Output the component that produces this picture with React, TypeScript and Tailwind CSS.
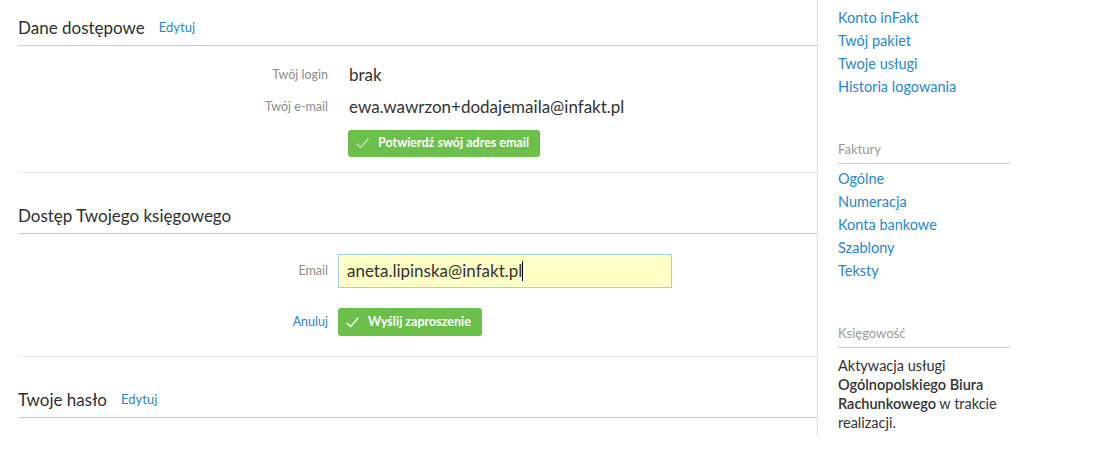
import React from 'react';

const font = { fontFamily: 'Lato, "Noto Sans", sans-serif' };

function Check() {
  return (
    <svg width="13" height="11" viewBox="0 0 13 11" className="shrink-0">
      <path d="M1 6.2 L4.6 9.6 L12 1" fill="none" stroke="currentColor" strokeWidth="1.4" strokeLinecap="round" strokeLinejoin="round" />
    </svg>
  );
}

function SectionHeader({ title, edit, first }: { title: string; edit?: boolean; first?: boolean }) {
  return (
    <div
      className={`flex items-center gap-[14px] border-b border-[#c8cdd2] ${
        first ? 'h-[46px] pt-[10px]' : 'h-[61px] pt-[26px]'
      }`}
    >
      <span className="text-[17px] leading-[24px] text-[#2f2f2f]">{title}</span>
      {edit && <a className="text-[13px] text-[#2b87c6] cursor-pointer">Edytuj</a>}
    </div>
  );
}

function SideLink({ children }: { children: React.ReactNode }) {
  return <a className="block text-[14.5px] leading-[23px] text-[#2b87c6] cursor-pointer whitespace-nowrap">{children}</a>;
}

function SideHeader({ children }: { children: React.ReactNode }) {
  return (
    <div className="text-[13px] leading-[20px] text-[#999] pb-[4px] border-b border-[#c8cdd2]">{children}</div>
  );
}

export default function App() {
  return (
    <div className="flex bg-white w-[1118px] h-[458px] overflow-hidden" style={font}>
      {/* Main column */}
      <div className="w-[817px] pl-[18px] shrink-0">
        {/* Dane dostępowe */}
        <SectionHeader title="Dane dostępowe" edit first />
        <div className="pt-[13px] pb-[15px] border-b border-[#e3e6e9]">
          <div className="flex items-center h-[32px]">
            <span className="w-[310px] text-right text-[12.5px] text-[#8c8c8c]">Twój login</span>
            <span className="ml-[21px] text-[17px] text-[#333]">brak</span>
          </div>
          <div className="flex items-center h-[32px]">
            <span className="w-[310px] text-right text-[12.5px] text-[#8c8c8c]">Twój e-mail</span>
            <span className="ml-[21px] text-[17px] text-[#333]">ewa.wawrzon+dodajemaila@infakt.pl</span>
          </div>
          <div className="flex mt-[7px]">
            <button className="ml-[330px] w-[192px] h-[27px] rounded-[3px] bg-[#6cbf4a] text-white text-[12.5px] font-bold whitespace-nowrap flex items-center gap-[9px] pl-[8px]">
              <span className="text-white/60"><Check /></span>
              Potwierdź swój adres email
            </button>
          </div>
        </div>

        {/* Dostęp Twojego księgowego */}
        <SectionHeader title="Dostęp Twojego księgowego" />
        <div className="pt-[20px] pb-[20px] border-b border-[#e3e6e9]">
          <div className="flex items-center">
            <span className="w-[310px] text-right text-[12.5px] text-[#8c8c8c]">Email</span>
            <div className="ml-[10px] w-[334px] h-[34px] border border-[#a7d0dc] bg-[#ffffc6] flex items-center pl-[8px] text-[17px] text-[#333]">
              aneta.lipinska@infakt.pl
              <span className="inline-block w-[1px] h-[20px] bg-black" />
            </div>
          </div>
          <div className="flex items-center mt-[20px]">
            <a className="w-[310px] text-right text-[12.5px] text-[#2b87c6] cursor-pointer">Anuluj</a>
            <button className="ml-[10px] w-[144px] h-[28px] rounded-[3px] bg-[#6cbf4a] text-white text-[12.5px] font-bold whitespace-nowrap flex items-center gap-[9px] pl-[8px]">
              <Check />
              Wyślij zaproszenie
            </button>
          </div>
        </div>

        {/* Twoje hasło */}
        <SectionHeader title="Twoje hasło" edit />
      </div>

      {/* Sidebar */}
      <div className="h-[436px] border-l border-[#dde0e4] pl-[20px] overflow-hidden">
        <div className="w-[172px] mt-[-17px]">
          <SideLink>Ustawienia konta</SideLink>
          <SideLink>Konto inFakt</SideLink>
          <SideLink>Twój pakiet</SideLink>
          <SideLink>Twoje usługi</SideLink>
          <SideLink>Historia logowania</SideLink>

          <div className="mt-[41px]">
            <SideHeader>Faktury</SideHeader>
            <div className="pt-[3px]">
              <SideLink>Ogólne</SideLink>
              <SideLink>Numeracja</SideLink>
              <SideLink>Konta bankowe</SideLink>
              <SideLink>Szablony</SideLink>
              <SideLink>Teksty</SideLink>
            </div>
          </div>

          <div className="mt-[41px]">
            <SideHeader>Księgowość</SideHeader>
            <p className="pt-[8px] text-[14.5px] leading-[19px] text-[#333] whitespace-nowrap">
              Aktywacja usługi
              <br />
              <span className="font-semibold">Ogólnopolskiego Biura</span>
              <br />
              <span className="font-semibold">Rachunkowego</span> w trakcie
              <br />
              realizacji.
            </p>
          </div>
        </div>
      </div>
    </div>
  );
}
